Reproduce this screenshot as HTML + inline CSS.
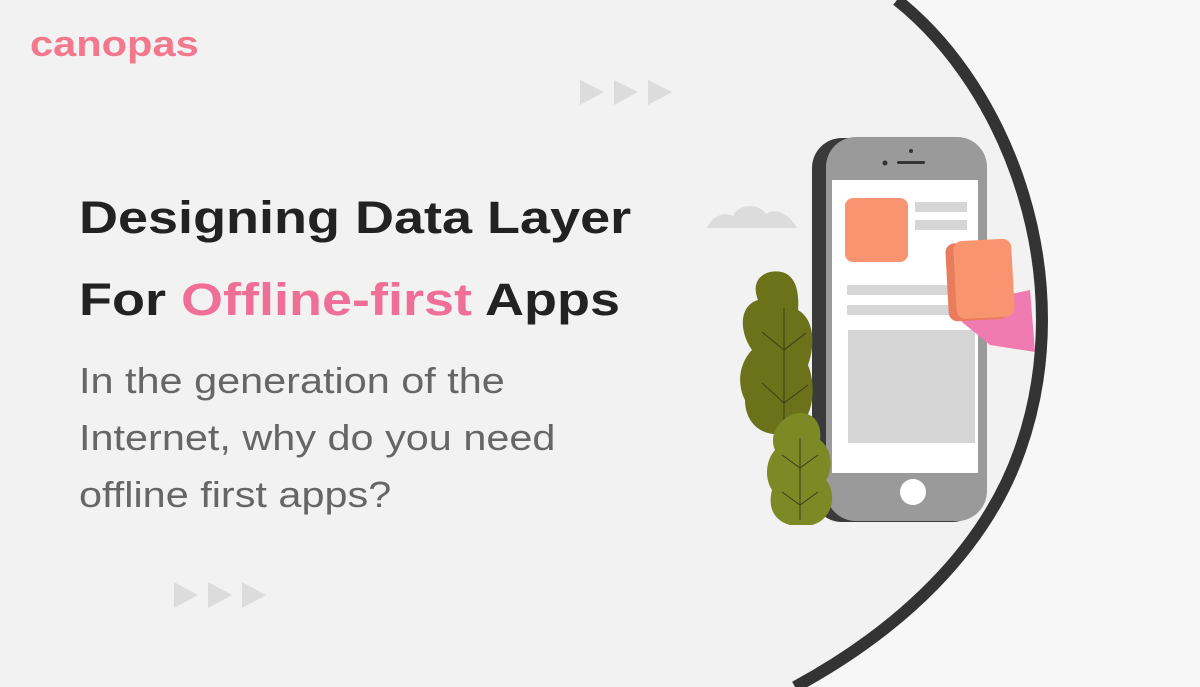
<!DOCTYPE html>
<html><head><meta charset="utf-8"><style>
html,body{margin:0;padding:0}
body{width:1200px;height:687px;overflow:hidden;background:#f2f2f2;position:relative;font-family:"Liberation Sans",sans-serif}
.logo{position:absolute;left:30px;top:23px;font-size:36px;font-weight:bold;color:#f4788d;transform:scaleX(1.155);transform-origin:left top;white-space:nowrap}
h1{position:absolute;left:79px;top:177px;margin:0;font-size:45px;line-height:82px;font-weight:bold;color:#222;transform:scaleX(1.2);transform-origin:left top;white-space:nowrap}
h1 span{color:#ef6f97}
p{position:absolute;left:79px;top:352px;margin:0;font-size:36px;line-height:57px;color:#666;transform:scaleX(1.15);transform-origin:left top;white-space:nowrap}
svg{position:absolute;left:0;top:0}
</style></head><body>
<svg width="1200" height="687" viewBox="0 0 1200 687">
<path d="M897,0 C1010,90 1080,280 1020,450 C985,550 900,630 795,687 L1200,687 L1200,0 Z" fill="#f7f7f7"/>
<g fill="#dcdcdc">
<polygon points="580,80 604,92 580,105"/><polygon points="614,80 638,92 614,105"/><polygon points="648,80 672,92 648,105"/>
<polygon points="174,582 198,595 174,608"/><polygon points="208,582 232,595 208,608"/><polygon points="242,582 266,595 242,608"/>
</g>
<path d="M707,228 C712,215 725,212 733,216 C738,204 758,202 766,214 C775,208 788,212 797,228 Z" fill="#dcdcdc"/>
<rect x="812" y="138" width="170" height="384" rx="30" fill="#3a3a3a"/>
<rect x="826" y="137" width="161" height="384" rx="30" fill="#9a9a9a"/>
<rect x="832" y="180" width="146" height="293" fill="#fff"/>
<rect x="845" y="198" width="63" height="64" rx="8" fill="#f99470"/>
<rect x="915" y="202" width="52" height="10" fill="#d6d6d6"/>
<rect x="915" y="220" width="52" height="10" fill="#d6d6d6"/>
<rect x="847" y="285" width="110" height="10" fill="#d6d6d6"/>
<rect x="847" y="305" width="110" height="10" fill="#d6d6d6"/>
<rect x="848" y="330" width="127" height="113" fill="#d5d5d5"/>
<circle cx="913" cy="492" r="13" fill="#fff"/>
<circle cx="911" cy="151" r="2" fill="#333"/>
<circle cx="885" cy="163" r="2.5" fill="#333"/>
<rect x="897" y="161" width="28" height="3" rx="1.5" fill="#333"/>
<path d="M960,305 L1030,290 L1035,352 L990,345 L962,322 Z" fill="#ef7bb0"/>
<path d="M955,300 L965,295 L972,315 L958,318 Z" fill="#f6b8d3"/>
<g transform="rotate(-3 981 280)">
<rect x="947" y="242" width="60" height="78" rx="9" fill="#e87c5c"/>
<rect x="955" y="240" width="58" height="78" rx="9" fill="#f99470"/>
</g>
<path d="M770,272 C792,268 800,285 798,310 C815,320 815,345 808,365 C818,390 812,425 790,432 C765,440 745,425 745,400 C735,380 742,360 752,350 C738,330 740,305 758,300 C752,285 758,275 770,272 Z" fill="#6b7219"/>
<g stroke="#3d3a1a" stroke-width="1" fill="none"><path d="M784,308 L784,420 M762,332 L784,350 L806,333 M762,383 L784,403 L808,385"/></g>
<path d="M800,413 C815,413 822,425 820,440 C833,450 833,470 826,480 C838,495 832,520 812,525 L790,525 C772,520 768,505 772,490 C764,478 766,460 775,450 C768,435 780,415 800,413 Z" fill="#7b8a25"/>
<g stroke="#3d3a1a" stroke-width="1" fill="none"><path d="M800,438 L800,520 M782,455 L800,468 L818,455 M782,492 L800,505 L818,492"/></g>
<path d="M897,0 C1010,90 1080,280 1020,450 C985,550 900,630 795,687" fill="none" stroke="#333" stroke-width="12"/>
</svg>
<div class="logo">canopas</div>
<h1>Designing Data Layer<br>For <span>Offline-first</span> Apps</h1>
<p>In the generation of the<br>Internet, why do you need<br>offline first apps?</p>
</body></html>
